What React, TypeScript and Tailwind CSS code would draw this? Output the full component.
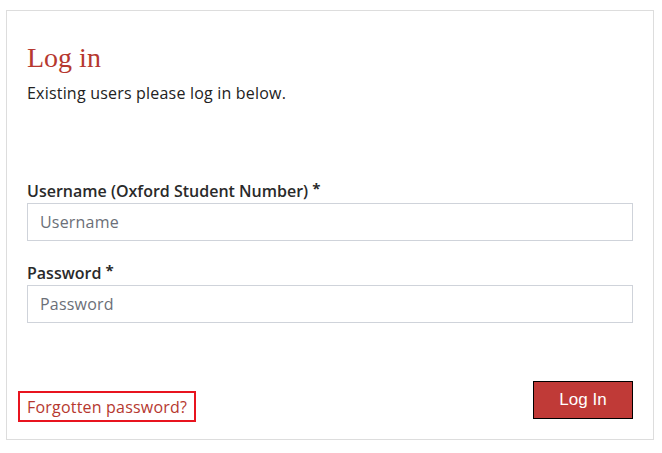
import React from "react";

export default function App() {
  return (
    <div className="pl-[6px] pt-[10px] bg-white" style={{ fontFamily: '"Open Sans", "Liberation Sans", sans-serif' }}>
      <div className="w-[648px] h-[430px] border border-[#dddddd] px-[20px] flex flex-col">
        <h1
          className="mt-[31px] text-[28px] leading-[32px] text-[#b6382f] font-normal"
          style={{ fontFamily: '"Liberation Serif", "DejaVu Serif", serif' }}
        >
          Log in
        </h1>
        <p className="mt-[8px] text-[16px] leading-[22px] tracking-[0.2px] text-[#222]">Existing users please log in below.</p>

        <label className="mt-[76px] block text-[16px] leading-[22px] font-semibold text-[#2a2a2a]">
          Username (Oxford Student Number) <span className="relative -top-[3px] font-bold text-[15px]">*</span>
        </label>
        <input
          className="mt-[1px] h-[38px] w-full border border-[#cfd3da] px-[12px] text-[16px] tracking-[0.2px] text-[#333] placeholder:text-[#6b6f78] outline-none"
          placeholder="Username"
        />

        <label className="mt-[21px] block text-[16px] leading-[22px] font-semibold text-[#2a2a2a]">
          Password <span className="relative -top-[3px] font-bold text-[15px]">*</span>
        </label>
        <input
          type="password"
          className="mt-[1px] h-[38px] w-full border border-[#cfd3da] px-[12px] text-[16px] tracking-[0.2px] text-[#333] placeholder:text-[#6b6f78] outline-none"
          placeholder="Password"
        />

        <div className="mt-[58px] flex justify-between items-start">
          <a
            href="#"
            className="-ml-[9px] mt-[10px] border-2 border-[#e8141f] px-[7px] h-[31px] flex items-center text-[16px] tracking-[0.2px] text-[#b6382f]"
          >
            Forgotten password?
          </a>
          <button
            className="w-[100px] h-[38px] bg-[#c03a37] border border-black text-white text-[17px]"
            style={{ fontFamily: '"Liberation Sans", Arial, sans-serif' }}
          >
            Log In
          </button>
        </div>
      </div>
    </div>
  );
}
